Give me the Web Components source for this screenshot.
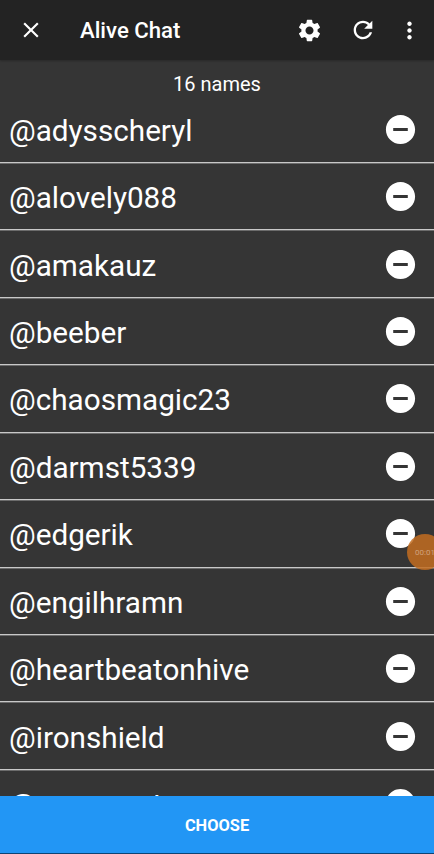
<!DOCTYPE html>
<html lang="en">
<head>
<meta charset="utf-8">
<title>Alive Chat</title>
<style>
  html, body {
    margin: 0;
    height: 100%;
    overflow: hidden;
    background: #353535;
  }
</style>
</head>
<body>
<chat-picker>
  <chat-toolbar slot="toolbar">Alive Chat</chat-toolbar>
  <span slot="count">16 names</span>
  <name-row>@adysscheryl</name-row>
  <name-row>@alovely088</name-row>
  <name-row>@amakauz</name-row>
  <name-row>@beeber</name-row>
  <name-row>@chaosmagic23</name-row>
  <name-row>@darmst5339</name-row>
  <name-row>@edgerik</name-row>
  <name-row>@engilhramn</name-row>
  <name-row>@heartbeatonhive</name-row>
  <name-row>@ironshield</name-row>
  <name-row>@manacrot</name-row>
  <choose-button slot="action">CHOOSE</choose-button>
  <record-timer slot="overlay">00:01</record-timer>
</chat-picker>

<script>
const icons = {
  close: "M19 6.41L17.59 5 12 10.59 6.41 5 5 6.41 10.59 12 5 17.59 6.41 19 12 13.41 17.59 19 19 17.59 13.41 12z",
  settings: "M19.14 12.94c.04-.3.06-.61.06-.94s-.02-.64-.07-.94l2.03-1.58c.18-.14.23-.41.12-.61l-1.92-3.32c-.12-.22-.37-.29-.59-.22l-2.39.96c-.5-.38-1.03-.7-1.62-.94l-.36-2.54c-.04-.24-.24-.41-.48-.41h-3.84c-.24 0-.43.17-.47.41l-.36 2.54c-.59.24-1.13.57-1.62.94l-2.39-.96c-.22-.08-.47 0-.59.22L2.74 8.87c-.12.21-.08.47.12.61l2.03 1.58c-.05.3-.09.63-.09.94s.02.64.07.94l-2.03 1.58c-.18.14-.23.41-.12.61l1.92 3.32c.12.22.37.29.59.22l2.39-.96c.5.38 1.03.7 1.62.94l.36 2.54c.05.24.24.41.48.41h3.84c.24 0 .44-.17.47-.41l.36-2.54c.59-.24 1.13-.56 1.62-.94l2.39.96c.22.08.47 0 .59-.22l1.92-3.32c.12-.22.07-.47-.12-.61l-2.01-1.58zM12 15.6c-1.98 0-3.6-1.62-3.6-3.6s1.62-3.6 3.6-3.6 3.6 1.62 3.6 3.6-1.62 3.6-3.6 3.6z",
  refresh: "M17.65 6.35C16.2 4.9 14.21 4 12 4c-4.42 0-7.99 3.58-7.99 8s3.57 8 7.99 8c3.73 0 6.84-2.55 7.73-6h-2.08c-.82 2.33-3.04 4-5.65 4-3.31 0-6-2.69-6-6s2.69-6 6-6c1.66 0 3.14.69 4.22 1.78L13 11h7V4l-2.35 2.35z",
  more: "M12 8c1.1 0 2-.9 2-2s-.9-2-2-2-2 .9-2 2 .9 2 2 2zm0 2c-1.1 0-2 .9-2 2s.9 2 2 2 2-.9 2-2-.9-2-2-2zm0 6c-1.1 0-2 .9-2 2s.9 2 2 2 2-.9 2-2-.9-2-2-2z",
  remove: "M12 2C6.48 2 2 6.48 2 12s4.48 10 10 10 10-4.48 10-10S17.52 2 12 2zm5 11H7v-2h10v2z",
};

class MdIcon extends HTMLElement {
  connectedCallback() {
    if (this.shadowRoot) return;
    this.attachShadow({ mode: "open" }).innerHTML = `
      <style>
        :host { display: block; flex: none; width: 24px; height: 24px; }
        svg { display: block; width: 100%; height: 100%; fill: currentColor; }
      </style>
      <svg viewBox="0 0 24 24" aria-hidden="true"><path d="${icons[this.getAttribute("name")]}"/></svg>
    `;
  }
}

customElements.define("md-icon", MdIcon);

class ChatToolbar extends HTMLElement {
  constructor() {
    super();
    this.attachShadow({ mode: "open" }).innerHTML = `
      <style>
        :host {
          display: flex;
          align-items: center;
          box-sizing: border-box;
          height: 60px;
          padding: 0 12px 0 18px;
          background: #232323;
          box-shadow: 0 1px 2px rgba(0, 0, 0, .25);
        }
        .title {
          flex: 1;
          margin-left: 36px;
          font-size: 22.2px;
          font-weight: 500;
        }
        .close { width: 26px; height: 26px; }
        .settings { width: 27px; height: 27px; margin-right: 26px; }
        .refresh { width: 28px; height: 28px; margin-right: 19px; }
        .more { width: 27px; height: 27px; margin-right: -1px; }
      </style>
      <md-icon class="close" name="close"></md-icon>
      <div class="title"><slot></slot></div>
      <md-icon class="settings" name="settings"></md-icon>
      <md-icon class="refresh" name="refresh"></md-icon>
      <md-icon class="more" name="more"></md-icon>
    `;
  }
}

customElements.define("chat-toolbar", ChatToolbar);

class NameRow extends HTMLElement {
  constructor() {
    super();
    this.attachShadow({ mode: "open" }).innerHTML = `
      <style>
        :host {
          display: flex;
          flex: none;
          align-items: center;
          justify-content: space-between;
          box-sizing: border-box;
          height: 67.44px;
          padding: 1px 16px 0 9px;
          border-bottom: 1px solid #c8c8c8;
          box-shadow: 0 1px 0 #6c6c6c;
          font-size: 29.7px;
          line-height: 36px;
        }
        .name { padding-top: 3px; }
        md-icon { width: 35px; height: 35px; }
      </style>
      <div class="name"><slot></slot></div>
      <md-icon name="remove"></md-icon>
    `;
  }
}

customElements.define("name-row", NameRow);

class ChooseButton extends HTMLElement {
  constructor() {
    super();
    this.setAttribute("role", "button");
    this.attachShadow({ mode: "open" }).innerHTML = `
      <style>
        :host {
          display: flex;
          align-items: center;
          justify-content: center;
          box-sizing: border-box;
          height: 58px;
          padding-top: 2px;
          border-bottom: 1px solid #0d4373;
          background: #2296f5;
          font-size: 16.4px;
          font-weight: 700;
        }
      </style>
      <slot></slot>
    `;
  }
}

customElements.define("choose-button", ChooseButton);

// Floating screen recorder bubble, half off the right edge
class RecordTimer extends HTMLElement {
  constructor() {
    super();
    this.attachShadow({ mode: "open" }).innerHTML = `
      <style>
        :host {
          position: absolute;
          top: 534px;
          right: -9px;
          display: flex;
          align-items: center;
          justify-content: center;
          width: 36px;
          height: 36px;
          border-radius: 50%;
          background: rgba(194, 108, 32, .85);
          color: #d0a27c;
          font-size: 8px;
        }
      </style>
      <slot></slot>
    `;
  }
}

customElements.define("record-timer", RecordTimer);

class ChatPicker extends HTMLElement {
  constructor() {
    super();
    this.attachShadow({ mode: "open" }).innerHTML = `
      <style>
        :host {
          position: relative;
          display: flex;
          flex-direction: column;
          height: 100vh;
          overflow: hidden;
          background: #353535;
          color: #fff;
          font-family: Roboto, sans-serif;
        }
        .count {
          flex: none;
          height: 35.5px;
          line-height: 48px;
          font-size: 20px;
          text-align: center;
        }
        .list {
          display: flex;
          flex: 1;
          flex-direction: column;
          min-height: 0;
          overflow: hidden;
        }
      </style>
      <slot name="toolbar"></slot>
      <div class="count"><slot name="count"></slot></div>
      <div class="list"><slot></slot></div>
      <slot name="action"></slot>
      <slot name="overlay"></slot>
    `;
  }
}

customElements.define("chat-picker", ChatPicker);
</script>
</body>
</html>
